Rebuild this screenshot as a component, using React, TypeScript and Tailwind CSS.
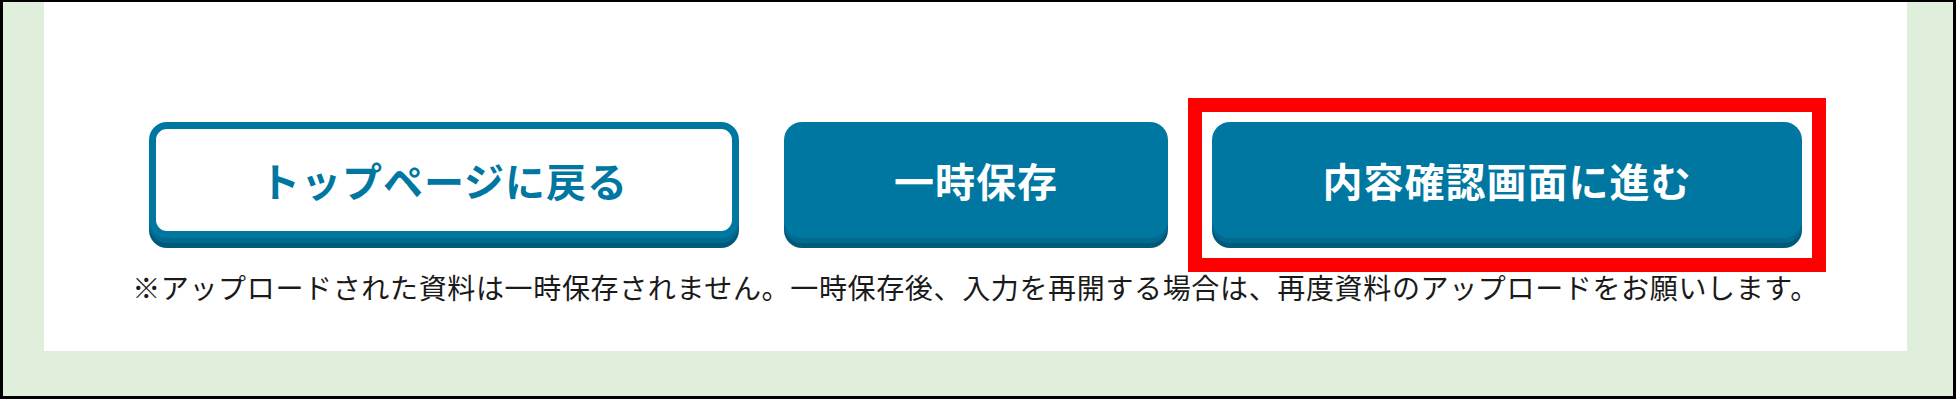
const font = { fontFamily: '"Noto Sans CJK JP", "Noto Sans", sans-serif' }

function ActionButton({
  label,
  width,
  variant,
}: {
  label: string
  width: string
  variant: "outline" | "solid"
}) {
  const base =
    "h-[116px] rounded-[18px] flex items-center justify-center text-[40px] font-bold tracking-[1px] shadow-[0_5px_0_#006a8f,0_10px_0_#00587a]"
  const look =
    variant === "outline"
      ? "bg-white border-[7px] border-[#0077a1] text-[#0077a1]"
      : "bg-[#0077a1] text-white"
  return (
    <button type="button" className={`${base} ${look} ${width}`} style={font}>
      {label}
    </button>
  )
}

export default function App() {
  return (
    <div className="w-[1957px] h-[409px] bg-white">
      <div className="w-[1956px] h-[399px] border-t-2 border-x-[3px] border-b-[3px] border-black bg-[#dfefdc] pl-[41px] pr-[46px]">
        <div className="h-[349px] bg-white flex flex-col items-center pt-[120px]">
          <div className="flex gap-[45px]">
            <ActionButton label="トップページに戻る" width="w-[590px]" variant="outline" />
            <ActionButton label="一時保存" width="w-[384px]" variant="solid" />
            <div className="relative ml-[-1px]">
              <ActionButton label="内容確認画面に進む" width="w-[590px]" variant="solid" />
              {/* annotation frame */}
              <span className="absolute -left-[24px] -right-[24px] -top-[24px] -bottom-[34px] border-[14px] border-[#ff0000] pointer-events-none" />
            </div>
          </div>
          <p className="mt-[29px] text-[28px] leading-[40px] text-[#1a1a1a] tracking-[0.65px]" style={font}>
            ※アップロードされた資料は一時保存されません。一時保存後、入力を再開する場合は、再度資料のアップロードをお願いします。
          </p>
        </div>
      </div>
    </div>
  )
}
